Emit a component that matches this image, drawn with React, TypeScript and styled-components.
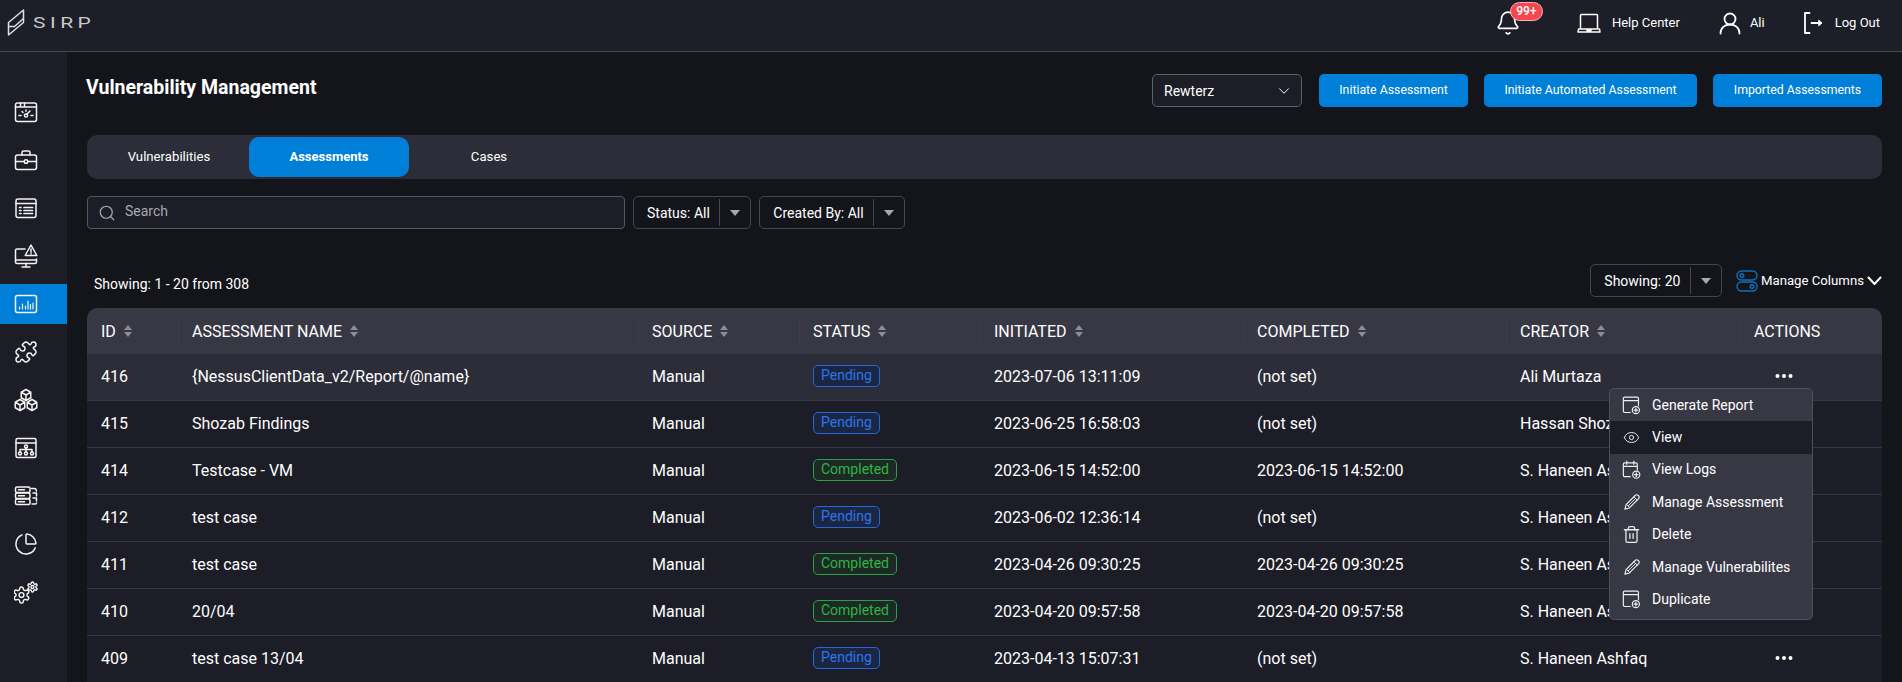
import React from 'react';
import styled, { createGlobalStyle } from 'styled-components';
import { Bell, ChartPie, ChevronDown, Eye, Puzzle, Search, Trash2 } from 'lucide-react';

const GlobalStyle = createGlobalStyle`
  html, body {
    margin: 0;
    height: 100%;
    overflow: hidden;
    background: #14151b;
    color: #fff;
    font-family: Roboto, "Liberation Sans", sans-serif;
  }
  * { box-sizing: border-box; }
`;

const Page = styled.div`
  width: 1902px;
  height: 682px;
  overflow: hidden;
  display: flex;
  flex-direction: column;
`;

const TopBar = styled.header`
  flex: 0 0 52px;
  display: flex;
  align-items: center;
  justify-content: space-between;
  padding: 0 22px 6px 7px;
  background: #1d1e27;
  border-bottom: 1px solid #4a4b53;
`;

const Brand = styled.div`
  display: flex;
  align-items: center;
  gap: 8px;
`;

const BrandName = styled.span`
  display: inline-block;
  font-size: 14px;
  font-weight: 400;
  letter-spacing: 3px;
  color: #c9cacd;
  transform: scaleX(1.5);
  transform-origin: left center;
`;

const TopActions = styled.nav`
  display: flex;
  align-items: center;
`;

const TopItem = styled.div<{ $gap: number; $left: number }>`
  display: flex;
  align-items: center;
  gap: ${p => p.$gap}px;
  margin-left: ${p => p.$left}px;
  font-size: 13px;
  font-weight: 400;
  line-height: 16px;
`;

const BellWrap = styled.div`
  position: relative;
  width: 26px;
  height: 28px;
  margin-top: 3px;
`;

const Badge = styled.span`
  position: absolute;
  left: 15px;
  top: -8px;
  width: 33px;
  height: 19px;
  border-radius: 10px;
  background: #f4474f;
  border: 1px solid #f3b5b8;
  font-size: 12px;
  font-weight: 500;
  line-height: 17px;
  text-align: center;
`;

const Body = styled.div`
  flex: 1;
  display: flex;
  min-height: 0;
`;

const Sidebar = styled.aside`
  flex: 0 0 67px;
  display: flex;
  flex-direction: column;
  gap: 8px;
  padding-top: 40px;
  background: #1c1d26;
`;

const SideItem = styled.div<{ $active?: boolean }>`
  height: 40px;
  display: flex;
  align-items: center;
  justify-content: center;
  padding-right: 15px;
  background: ${p => (p.$active ? '#007fd9' : 'transparent')};
  color: #f4f4f5;
`;

const Main = styled.main`
  flex: 1;
  min-width: 0;
  padding: 22px 20px 0;
`;

const HeadRow = styled.div`
  display: flex;
  align-items: flex-start;
  justify-content: space-between;
`;

const Title = styled.h1`
  margin: 2px 0 0 -1px;
  font-size: 19.5px;
  line-height: 24px;
  font-weight: 700;
`;

const HeadActions = styled.div`
  display: flex;
  gap: 16px;
`;

const OrgSelect = styled.div`
  width: 150px;
  height: 33px;
  display: flex;
  align-items: center;
  justify-content: space-between;
  padding: 0 8px 0 11px;
  margin-right: 1px;
  border: 1px solid #5f6068;
  border-radius: 5px;
  background: #1c1d26;
  font-size: 14px;
`;

const PrimaryButton = styled.button<{ $width: number }>`
  width: ${p => p.$width}px;
  height: 33px;
  padding: 0 0 2px;
  border: none;
  border-radius: 5px;
  background: #007fd9;
  color: #fff;
  font-family: inherit;
  font-size: 12.3px;
  font-weight: 400;
`;

const Tabs = styled.div`
  height: 44px;
  margin-top: 28px;
  padding: 2px;
  display: flex;
  border-radius: 10px;
  background: #2c2d38;
`;

const Tab = styled.div<{ $active?: boolean }>`
  width: 160px;
  padding-bottom: 2px;
  display: flex;
  align-items: center;
  justify-content: center;
  border-radius: 10px;
  font-size: ${p => (p.$active ? 13 : 13.2)}px;
  font-weight: ${p => (p.$active ? 700 : 400)};
  background: ${p => (p.$active ? '#007fd9' : 'transparent')};
`;

const Filters = styled.div`
  display: flex;
  gap: 8px;
  margin-top: 17px;
`;

const SearchBox = styled.div`
  width: 538px;
  height: 33px;
  display: flex;
  align-items: center;
  gap: 9px;
  padding: 0 0 3px 10px;
  border: 1px solid #55565e;
  border-radius: 4px;
  background: #1c1d26;
  color: #a9aaaf;
  font-size: 14px;

  svg { margin-top: 3px; }
`;

const DropSelect = styled.div`
  height: 33px;
  display: inline-flex;
  align-items: center;
  padding-left: 13px;
  border: 1px solid #45464e;
  border-radius: 5px;
  font-size: 14px;
`;

const DropCaret = styled.span`
  width: 31px;
  height: 27px;
  margin-left: 9.5px;
  border-left: 1px solid #45464e;
  display: flex;
  align-items: center;
  justify-content: center;

  &::after {
    content: '';
    border-left: 5px solid transparent;
    border-right: 5px solid transparent;
    border-top: 6px solid #a9aaaf;
  }
`;

const ListBar = styled.div`
  display: flex;
  align-items: center;
  justify-content: space-between;
  margin-top: 35px;
`;

const Count = styled.div`
  margin-left: 7px;
  margin-top: 6px;
  font-size: 14px;
`;

const ListTools = styled.div`
  display: flex;
  align-items: center;
`;

const ManageColumns = styled.div`
  display: flex;
  align-items: center;
  gap: 3px;
  margin-left: 14px;
  font-size: 13.2px;
  font-weight: 400;
`;

const TableWrap = styled.div`
  position: relative;
  margin-top: 11px;
`;

const Table = styled.table`
  width: 1795px;
  table-layout: fixed;
  border-collapse: separate;
  border-spacing: 0;
  font-size: 16px;
`;

const HeadCell = styled.th`
  height: 46px;
  padding: 0 14px;
  text-align: left;
  font-weight: 400;
  background: #383845;
  position: relative;

  &:first-child { border-top-left-radius: 10px; }
  &:last-child { border-top-right-radius: 10px; }
  &:not(:first-child)::before {
    content: '';
    position: absolute;
    left: 0;
    top: 10px;
    bottom: 10px;
    width: 1px;
    background: #3e3e4b;
  }
`;

const HeadLabel = styled.span`
  display: inline-flex;
  align-items: center;
  gap: 8px;
`;

const SortMark = styled.span`
  display: inline-flex;
  flex-direction: column;
  gap: 2px;

  &::before, &::after {
    content: '';
    border-left: 4.5px solid transparent;
    border-right: 4.5px solid transparent;
  }
  &::before { border-bottom: 5px solid #8d8d98; }
  &::after { border-top: 5px solid #8d8d98; }
`;

const Row = styled.tr<{ $hover?: boolean }>`
  background: ${p => (p.$hover ? '#2c2d38' : '#1c1d26')};
`;

const Cell = styled.td`
  height: 47px;
  padding: 0 14px 2px;
  border-bottom: 1px solid #353641;
`;

const StatusPill = styled.span<{ $done?: boolean }>`
  display: inline-block;
  height: 22px;
  padding: 0 7px;
  border-radius: 5px;
  font-size: 14px;
  line-height: 18px;
  vertical-align: 1px;
  border: 1px solid ${p => (p.$done ? '#2ea043' : '#2468d8')};
  background: ${p => (p.$done ? '#1c2a26' : '#1b2742')};
  color: ${p => (p.$done ? '#2fb344' : '#2f74ec')};
`;

const Dots = styled.svg`
  display: block;
  margin-left: 21px;
`;

const Menu = styled.ul`
  position: absolute;
  left: 1522px;
  top: 80px;
  width: 204px;
  height: 232px;
  margin: 0;
  padding: 0;
  list-style: none;
  overflow: hidden;
  border: 1px solid #4e4f5c;
  border-radius: 5px;
  background: #383845;
`;

const MenuItem = styled.li<{ $dark?: boolean }>`
  height: 32.4px;
  display: flex;
  align-items: center;
  gap: 11px;
  padding: 0 0 1px 12px;
  font-size: 14px;
  color: #fff;
  background: ${p => (p.$dark ? '#1c1d26' : 'transparent')};
`;

const MenuIcon = styled.span`
  width: 19px;
  display: flex;
  justify-content: center;
  color: #eeeef0;
`;

const GEAR =
  'M12.22 2h-.44a2 2 0 0 0-2 2v.18a2 2 0 0 1-1 1.73l-.43.25a2 2 0 0 1-2 0l-.15-.08a2 2 0 0 0-2.73.73l-.22.38a2 2 0 0 0 .73 2.73l.15.1a2 2 0 0 1 1 1.72v.51a2 2 0 0 1-1 1.74l-.15.09a2 2 0 0 0-.73 2.73l.22.38a2 2 0 0 0 2.73.73l.15-.08a2 2 0 0 1 2 0l.43.25a2 2 0 0 1 1 1.73V20a2 2 0 0 0 2 2h.44a2 2 0 0 0 2-2v-.18a2 2 0 0 1 1-1.73l.43-.25a2 2 0 0 1 2 0l.15.08a2 2 0 0 0 2.73-.73l.22-.39a2 2 0 0 0-.73-2.73l-.15-.08a2 2 0 0 1-1-1.74v-.5a2 2 0 0 1 1-1.74l.15-.09a2 2 0 0 0 .73-2.73l-.22-.38a2 2 0 0 0-2.73-.73l-.15.08a2 2 0 0 1-2 0l-.43-.25a2 2 0 0 1-1-1.73V4a2 2 0 0 0-2-2z';

type IconProps = { size?: number; children: React.ReactNode };

const Ico = ({ size = 24, children }: IconProps) => (
  <svg width={size} height={size} viewBox="0 0 24 24" fill="none" stroke="currentColor" strokeWidth="1.5" strokeLinecap="round" strokeLinejoin="round">
    {children}
  </svg>
);

const LogoMark = () => (
  <svg width="18" height="27" viewBox="0 0 18 27" fill="none" stroke="#e0e0e3" strokeWidth="1.5" strokeLinejoin="round">
    <path d="M16.5 1 1.5 13.5v4h6l9-8V1z" />
    <path d="M1.5 17.5V26l15-12.5v-4" />
  </svg>
);

const DashboardIcon = () => (
  <Ico>
    <rect x="1.5" y="3" width="21" height="18.5" rx="2" />
    <path d="M1.5 7h21M6.5 3v4M10.5 3v4" />
    <circle cx="12" cy="15.5" r="1.6" />
    <path d="m13 14 3-3M5 15.5h2M17 15.5h2M8 11.5l1 1M12 10v1.2" />
  </Ico>
);

const BriefcaseIcon = () => (
  <Ico>
    <rect x="1.5" y="7" width="21" height="14.5" rx="2" />
    <path d="M8 7V4.5A1.5 1.5 0 0 1 9.5 3h5A1.5 1.5 0 0 1 16 4.5V7M1.5 13.5H10M14 13.5h8.5" />
    <circle cx="12" cy="13.5" r="1.8" />
  </Ico>
);

const ListIcon = () => (
  <Ico>
    <rect x="2" y="3" width="20" height="18.5" rx="2" />
    <path d="M2 7.5h20M10 11.5h8.5M10 14.5h8.5M10 17.5h8.5M5.5 11.5h1.5M5.5 14.5h1.5M5.5 17.5h1.5" strokeWidth="1.7" />
  </Ico>
);

const MonitorAlertIcon = () => (
  <Ico>
    <path d="M11 5H3a1.5 1.5 0 0 0-1.5 1.5V18A1.5 1.5 0 0 0 3 19.5h18a1.5 1.5 0 0 0 1.5-1.5v-3" />
    <path d="M8 23h8M12 19.5V23M1.5 16h21" />
    <path d="M17 1l5.8 10.5H11.2L17 1zM17 5v3.2M17 9.8v.1" />
  </Ico>
);

const ChartIcon = () => (
  <Ico>
    <rect x="1.5" y="3.5" width="21" height="17" rx="2" />
    <path d="M5.5 17v-2M8.5 17v-5M11.5 17v-3M14 17V9M16.5 17v-4.5M19 17v-6" strokeWidth="1.2" />
  </Ico>
);

const Cube = ({ cx, cy, r }: { cx: number; cy: number; r: number }) => {
  const w = r * 0.87;
  const h = r / 2;
  return (
    <path d={`M${cx} ${cy - r}L${cx + w} ${cy - h}V${cy + h}L${cx} ${cy + r}L${cx - w} ${cy + h}V${cy - h}ZM${cx - w} ${cy - h}L${cx} ${cy}L${cx + w} ${cy - h}M${cx} ${cy}V${cy + r}`} />
  );
};

const BoxesIcon = () => (
  <Ico>
    <Cube cx={12} cy={7} r={5.5} />
    <Cube cx={6} cy={17} r={5.5} />
    <Cube cx={18} cy={17} r={5.5} />
  </Ico>
);

const OrgIcon = () => (
  <Ico>
    <rect x="2" y="2.5" width="20" height="19" rx="1.5" />
    <path d="M2 7h20M6 16v-2.5h12V16M12 12v4" />
    <circle cx="12" cy="10.5" r="1.5" />
    <circle cx="6" cy="17.5" r="1.5" />
    <circle cx="12" cy="17.5" r="1.5" />
    <circle cx="18" cy="17.5" r="1.5" />
  </Ico>
);

const ServerIcon = () => (
  <Ico>
    <rect x="1.5" y="3" width="14.5" height="5.5" rx="1.5" />
    <rect x="1.5" y="9" width="14.5" height="5.5" rx="1.5" />
    <rect x="1.5" y="15" width="14.5" height="5.5" rx="1.5" />
    <path d="M4.5 5.7h6M4.5 11.7h6M4.5 17.7h6M17.5 4.5h3a2 2 0 0 1 1.8 2.5M19 9h3.5v3M19 14h3.5v3M18 20h3.5a1 1 0 0 0 1-1" />
  </Ico>
);

const GearsIcon = () => (
  <svg width="24" height="24" viewBox="0 0 24 24" fill="none" stroke="currentColor" strokeLinecap="round" strokeLinejoin="round">
    <g transform="translate(-2.1 5.4) scale(.8)" strokeWidth="1.8">
      <path d={GEAR} />
      <circle cx="12" cy="12" r="3" />
    </g>
    <g transform="translate(12.5 1) scale(.5)" strokeWidth="2.8">
      <path d={GEAR} />
      <circle cx="12" cy="12" r="3" />
    </g>
  </svg>
);

const LaptopIcon = () => (
  <Ico>
    <path d="M3.5 17.5V4.5a1 1 0 0 1 1-1h15a1 1 0 0 1 1 1v13M1.5 18h21l.5 3H1l.5-3zM10 18v1.5h4V18" />
  </Ico>
);

const UserIcon = () => (
  <Ico>
    <circle cx="12" cy="8" r="5.5" strokeWidth="1.8" />
    <path d="M2.5 22.5c0-5.5 4.2-9 9.5-9s9.5 3.5 9.5 9" strokeWidth="1.8" />
  </Ico>
);

const LogoutIcon = () => (
  <Ico>
    <path d="M8.5 2H4v20h4.5M10.5 12H20" strokeWidth="1.8" />
    <path d="m18 9.5 3 2.5-3 2.5z" fill="currentColor" strokeWidth="1" />
  </Ico>
);

const WindowPlusIcon = () => (
  <Ico size={20}>
    <path d="M10.5 21.5H3.5a1.8 1.8 0 0 1-1.8-1.8V3.8A1.8 1.8 0 0 1 3.5 2h15.5a1.8 1.8 0 0 1 1.8 1.8v9M1.7 6.5h19" />
    <circle cx="17.5" cy="18.5" r="4.5" />
    <path d="M17.5 16.3v4.4M15.3 18.5h4.4" />
  </Ico>
);

const CalendarPlusIcon = () => (
  <Ico size={21}>
    <path d="M10.5 21H3.5a1.8 1.8 0 0 1-1.8-1.8V5.5a1.8 1.8 0 0 1 1.8-1.8h14a1.8 1.8 0 0 1 1.8 1.8v7M1.7 8h17.6M6 1.5v4M15 1.5v4" />
    <circle cx="18" cy="18.5" r="4.5" />
    <path d="M18 16.3v4.4M15.8 18.5h4.4" />
  </Ico>
);

const PenIcon = () => (
  <Ico size={18}>
    <path d="M2.5 21.5l1.6-6L16.5 3a2.4 2.4 0 0 1 3.4 0l1 1a2.4 2.4 0 0 1 0 3.4L8.5 19.9l-6 1.6z" />
    <path d="M14.5 5l4.5 4.5M4.5 15l4.5 4.5M7 17L17 7" strokeWidth="1.2" />
  </Ico>
);

const ToggleIcon = () => (
  <svg width="22" height="22" viewBox="0 0 22 22" fill="none" stroke="#0e6fc0" strokeWidth="1.4">
    <rect x="1" y="1" width="20" height="9" rx="4.5" />
    <rect x="1" y="12" width="20" height="9" rx="4.5" />
    <circle cx="6" cy="5.5" r="1.8" />
    <circle cx="16" cy="16.5" r="1.8" />
  </svg>
);

const WideChevron = () => (
  <svg width="15" height="10" viewBox="0 0 15 10" fill="none" stroke="#fff" strokeWidth="2" strokeLinecap="round" strokeLinejoin="round">
    <path d="m1.5 1.5 6 6.5 6-6.5" />
  </svg>
);

const COLUMNS = [
  { label: 'ID', width: 91, sort: true },
  { label: 'ASSESSMENT NAME', width: 460, sort: true },
  { label: 'SOURCE', width: 161, sort: true },
  { label: 'STATUS', width: 181, sort: true },
  { label: 'INITIATED', width: 263, sort: true },
  { label: 'COMPLETED', width: 263, sort: true },
  { label: 'CREATOR', width: 234, sort: true },
  { label: 'ACTIONS', width: 142, sort: false },
];

const ROWS = [
  { id: 416, name: '{NessusClientData_v2/Report/@name}', status: 'Pending', initiated: '2023-07-06 13:11:09', completed: '(not set)', creator: 'Ali Murtaza' },
  { id: 415, name: 'Shozab Findings', status: 'Pending', initiated: '2023-06-25 16:58:03', completed: '(not set)', creator: 'Hassan Shozab' },
  { id: 414, name: 'Testcase - VM', status: 'Completed', initiated: '2023-06-15 14:52:00', completed: '2023-06-15 14:52:00', creator: 'S. Haneen Ashfaq' },
  { id: 412, name: 'test case', status: 'Pending', initiated: '2023-06-02 12:36:14', completed: '(not set)', creator: 'S. Haneen Ashfaq' },
  { id: 411, name: 'test case', status: 'Completed', initiated: '2023-04-26 09:30:25', completed: '2023-04-26 09:30:25', creator: 'S. Haneen Ashfaq' },
  { id: 410, name: '20/04', status: 'Completed', initiated: '2023-04-20 09:57:58', completed: '2023-04-20 09:57:58', creator: 'S. Haneen Ashfaq' },
  { id: 409, name: 'test case 13/04', status: 'Pending', initiated: '2023-04-13 15:07:31', completed: '(not set)', creator: 'S. Haneen Ashfaq' },
];

const SIDE_ICONS = [
  <DashboardIcon />,
  <BriefcaseIcon />,
  <ListIcon />,
  <MonitorAlertIcon />,
  <ChartIcon />,
  <Puzzle size={24} strokeWidth={1.5} />,
  <BoxesIcon />,
  <OrgIcon />,
  <ServerIcon />,
  <ChartPie size={24} strokeWidth={1.5} />,
  <GearsIcon />,
];

export default function App() {
  return (
    <Page>
      <GlobalStyle />
      <TopBar>
        <Brand>
          <LogoMark />
          <BrandName>SIRP</BrandName>
        </Brand>
        <TopActions>
          <BellWrap>
            <Bell size={26} strokeWidth={1.5} />
            <Badge>99+</Badge>
          </BellWrap>
          <TopItem $gap={11} $left={56}><LaptopIcon />Help Center</TopItem>
          <TopItem $gap={8} $left={38}><UserIcon />Ali</TopItem>
          <TopItem $gap={10} $left={36}><LogoutIcon />Log Out</TopItem>
        </TopActions>
      </TopBar>
      <Body>
        <Sidebar>
          {SIDE_ICONS.map((icon, i) => (
            <SideItem key={i} $active={i === 4}>{icon}</SideItem>
          ))}
        </Sidebar>
        <Main>
          <HeadRow>
            <Title>Vulnerability Management</Title>
            <HeadActions>
              <OrgSelect>Rewterz<ChevronDown size={18} strokeWidth={1.3} /></OrgSelect>
              <PrimaryButton $width={149}>Initiate Assessment</PrimaryButton>
              <PrimaryButton $width={213}>Initiate Automated Assessment</PrimaryButton>
              <PrimaryButton $width={169}>Imported Assessments</PrimaryButton>
            </HeadActions>
          </HeadRow>

          <Tabs>
            <Tab>Vulnerabilities</Tab>
            <Tab $active>Assessments</Tab>
            <Tab>Cases</Tab>
          </Tabs>

          <Filters>
            <SearchBox><Search size={18} strokeWidth={1.6} />Search</SearchBox>
            <DropSelect>Status: All<DropCaret /></DropSelect>
            <DropSelect>Created By: All<DropCaret /></DropSelect>
          </Filters>

          <ListBar>
            <Count>Showing: 1 - 20 from 308</Count>
            <ListTools>
              <DropSelect>Showing: 20<DropCaret /></DropSelect>
              <ManageColumns>
                <ToggleIcon />Manage Columns<WideChevron />
              </ManageColumns>
            </ListTools>
          </ListBar>

          <TableWrap>
            <Table>
              <colgroup>
                {COLUMNS.map(c => <col key={c.label} width={c.width} />)}
              </colgroup>
              <thead>
                <tr>
                  {COLUMNS.map(c => (
                    <HeadCell key={c.label}>
                      <HeadLabel>{c.label}{c.sort && <SortMark />}</HeadLabel>
                    </HeadCell>
                  ))}
                </tr>
              </thead>
              <tbody>
                {ROWS.map((r, i) => (
                  <Row key={r.id} $hover={i === 0}>
                    <Cell>{r.id}</Cell>
                    <Cell>{r.name}</Cell>
                    <Cell>Manual</Cell>
                    <Cell><StatusPill $done={r.status === 'Completed'}>{r.status}</StatusPill></Cell>
                    <Cell>{r.initiated}</Cell>
                    <Cell>{r.completed}</Cell>
                    <Cell>{r.creator}</Cell>
                    <Cell>
                      {(i === 0 || i === 6) && (
                        <Dots width="18" height="6" viewBox="0 0 18 6" fill="#fff">
                          <circle cx="2.5" cy="3" r="2" />
                          <circle cx="9" cy="3" r="2" />
                          <circle cx="15.5" cy="3" r="2" />
                        </Dots>
                      )}
                    </Cell>
                  </Row>
                ))}
              </tbody>
            </Table>
            <Menu>
              <MenuItem><MenuIcon><WindowPlusIcon /></MenuIcon>Generate Report</MenuItem>
              <MenuItem $dark><MenuIcon><Eye size={17} strokeWidth={1.4} /></MenuIcon>View</MenuItem>
              <MenuItem><MenuIcon><CalendarPlusIcon /></MenuIcon>View Logs</MenuItem>
              <MenuItem><MenuIcon><PenIcon /></MenuIcon>Manage Assessment</MenuItem>
              <MenuItem><MenuIcon><Trash2 size={19} strokeWidth={1.6} /></MenuIcon>Delete</MenuItem>
              <MenuItem><MenuIcon><PenIcon /></MenuIcon>Manage Vulnerabilites</MenuItem>
              <MenuItem><MenuIcon><WindowPlusIcon /></MenuIcon>Duplicate</MenuItem>
            </Menu>
          </TableWrap>
        </Main>
      </Body>
    </Page>
  );
}
